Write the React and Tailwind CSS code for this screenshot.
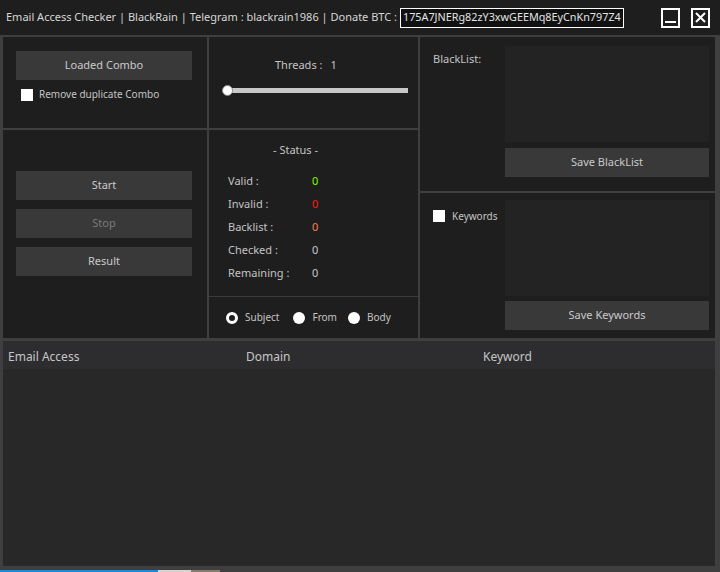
const FONT = "font-['Noto_Sans',sans-serif]";

function Button({ children, muted = false, className = "" }) {
  return (
    <div
      className={`h-[29px] bg-[#393939] flex items-center justify-center text-[11px] ${
        muted ? "text-[#7a7a7a]" : "text-[#c9c9c9]"
      } ${className}`}
    >
      {children}
    </div>
  );
}

function Check() {
  return <div className="w-[12px] h-[12px] bg-white shrink-0" />;
}

function Radio({ checked }) {
  return checked ? (
    <div className="w-[12px] h-[12px] rounded-full border-[3px] border-white bg-[#1e1e1e] shrink-0" />
  ) : (
    <div className="w-[12px] h-[12px] rounded-full bg-white shrink-0" />
  );
}

const stats = [
  { label: "Valid :", color: "text-[#7cfc00]" },
  { label: "Invalid :", color: "text-[#ff1a1a]" },
  { label: "Backlist :", color: "text-[#ff8050]" },
  { label: "Checked :", color: "text-[#c3cad2]" },
  { label: "Remaining :", color: "text-[#c3cad2]" },
];

export default function App() {
  return (
    <div
      className={`w-[720px] h-[572px] bg-[#1e1e1e] flex flex-col overflow-hidden text-[#c4c4c4] ${FONT}`}
    >
      {/* title bar */}
      <header className="h-[35px] shrink-0 flex items-center pl-[6px]">
        <span className="w-[393px] text-[11px] text-[#d6d6d6] whitespace-nowrap">
          Email Access Checker | BlackRain | Telegram : blackrain1986 | Donate BTC :
        </span>
        <div className="ml-[1px] w-[224px] h-[20px] border border-white bg-[#111111] flex items-center pl-[2px] text-[10.8px] text-[#e4e4e4] whitespace-nowrap overflow-hidden">
          175A7JNERg82zY3xwGEEMq8EyCnKn797Z4
        </div>
        <div className="ml-auto mr-[10px] flex gap-[11px]">
          <div className="w-[19px] h-[20px] border-2 border-white flex items-end justify-center pb-[3px]">
            <div className="w-[11px] h-[2px] bg-white" />
          </div>
          <div className="w-[19px] h-[20px] border-2 border-white flex items-center justify-center">
            <svg width="11" height="11" viewBox="0 0 11 11">
              <path d="M1 1L10 10M10 1L1 10" stroke="white" strokeWidth="2" />
            </svg>
          </div>
        </div>
      </header>

      {/* panels */}
      <div className="flex-1 bg-[#3f3f3f] pl-[3px] pr-[5px] pt-[2px] flex flex-col">
        <div className="h-[301px] flex gap-[2px]">
          {/* column 1 */}
          <div className="w-[204px] flex flex-col gap-[2px]">
            <div className="h-[91px] bg-[#1e1e1e] pt-[14px] pl-[13px]">
              <Button className="w-[176px]">Loaded Combo</Button>
              <div className="mt-[7px] ml-[5px] flex items-center gap-[6px]">
                <Check />
                <span className="text-[10px] text-[#c4c4c4]">Remove duplicate Combo</span>
              </div>
            </div>
            <div className="flex-1 bg-[#1e1e1e] pt-[41px] pl-[13px] flex flex-col gap-[9px]">
              <Button className="w-[176px]">Start</Button>
              <Button className="w-[176px]" muted>
                Stop
              </Button>
              <Button className="w-[176px]">Result</Button>
            </div>
          </div>

          {/* column 2 */}
          <div className="w-[209px] flex flex-col gap-[2px]">
            <div className="h-[91px] bg-[#1e1e1e] pt-[20px]">
              <div className="pl-[66px] flex text-[11px] leading-[16px] text-[#c4c4c4]">
                <span>Threads :</span>
                <span className="ml-[8px]">1</span>
              </div>
              <div className="relative ml-[18px] mt-[15px] w-[181px] h-[5px] bg-[#c8c8c8]">
                <div className="absolute left-[-5px] top-[-3px] w-[11px] h-[11px] rounded-full bg-white border border-[#8a8a8a]" />
              </div>
            </div>
            <div className="flex-1 bg-[#1e1e1e] flex flex-col">
              <div className="h-[166px] pt-[12px]">
                <div className="pl-[64px] text-[11px] leading-[16px] text-[#c4c4c4]">- Status -</div>
                <div className="mt-[12px] pl-[19px] flex flex-col">
                  {stats.map((s) => (
                    <div key={s.label} className="h-[23px] flex items-center text-[11px]">
                      <span className="w-[84px] text-[#c4c4c4]">{s.label}</span>
                      <span className={s.color}>0</span>
                    </div>
                  ))}
                </div>
              </div>
              <div className="h-[1px] bg-[#3a3a3a]" />
              <div className="flex-1 flex items-center pl-[17px] text-[10px] text-[#c4c4c4]">
                <Radio checked />
                <span className="ml-[7px]">Subject</span>
                <span className="ml-[14px]">
                  <Radio />
                </span>
                <span className="ml-[7px]">From</span>
                <span className="ml-[11px]">
                  <Radio />
                </span>
                <span className="ml-[7px]">Body</span>
              </div>
            </div>
          </div>

          {/* column 3 */}
          <div className="flex-1 flex flex-col gap-[2px]">
            <div className="h-[154px] bg-[#1e1e1e] pt-[9px] pl-[13px] flex">
              <span className="w-[72px] pt-[5px] text-[11px] leading-[16px] text-[#c4c4c4]">BlackList:</span>
              <div className="w-[204px] flex flex-col gap-[6px]">
                <div className="h-[96px] bg-[#232323]" />
                <Button>Save BlackList</Button>
              </div>
            </div>
            <div className="flex-1 bg-[#1e1e1e] pt-[7px] pl-[13px] flex">
              <div className="w-[72px] pt-[10px] flex items-start gap-[7px]">
                <Check />
                <span className="text-[10px] leading-[12px] text-[#c4c4c4]">Keywords</span>
              </div>
              <div className="w-[204px] flex flex-col gap-[5px]">
                <div className="h-[96px] bg-[#232323]" />
                <Button>Save Keywords</Button>
              </div>
            </div>
          </div>
        </div>

        {/* results list */}
        <div className="mt-[3px] h-[225px] bg-[#282828] flex flex-col">
          <div className="h-[28px] bg-[#2d2d2f] grid grid-cols-[238px_237px_1fr] pl-[5px] pt-[7px] text-[12px] leading-[18px] text-[#c6c6c6]">
            <span>Email Access</span>
            <span>Domain</span>
            <span>Keyword</span>
          </div>
          <div className="flex-1" />
        </div>

        <div className="flex-1 flex items-end -ml-[3px] -mr-[5px]">
          <div className="h-[2px] w-[158px] bg-[#1a8ad4]" />
          <div className="h-[2px] w-[33px] bg-[#d8d4cc]" />
          <div className="h-[2px] w-[29px] bg-[#8a7a6a]" />
        </div>
      </div>
    </div>
  );
}
